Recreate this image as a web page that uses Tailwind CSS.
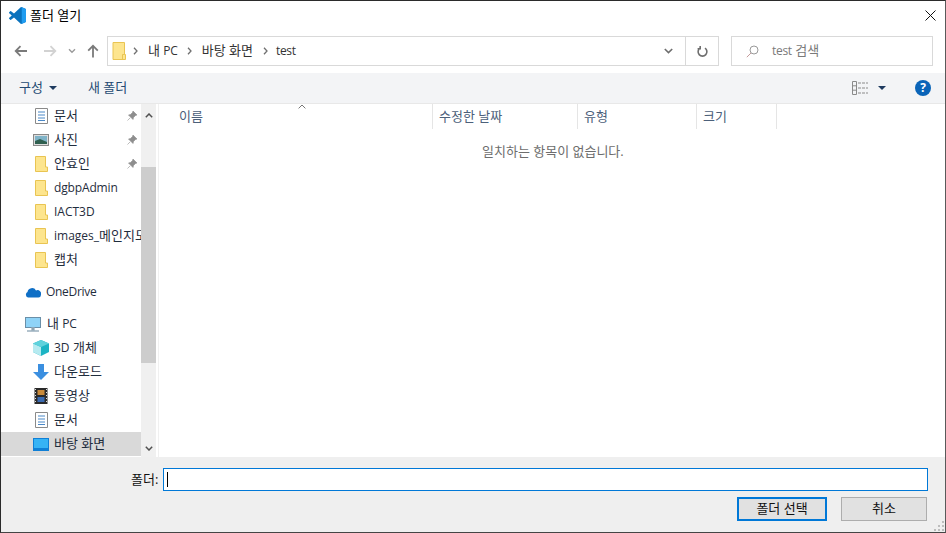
<!DOCTYPE html>
<html lang="ko"><head><meta charset="utf-8">
<script src="https://cdn.jsdelivr.net/npm/@tailwindcss/browser@4"></script>
</head>
<body class="bg-white">
<div class="w-[946px] h-[533px] overflow-hidden flex flex-col border border-[#2b2b2b] border-r-[#5a5a5a] border-b-[#444] bg-white text-[13px] leading-[16px] text-[#1a1a1a] font-['Open_Sans','Noto_Sans_CJK_KR',sans-serif]">
  <!-- title -->
  <div class="h-[29px] shrink-0 flex items-center pl-[8px] pr-[9px]">
    <svg class="w-[17px] h-[17px] shrink-0" viewBox="0 0 100 100"><path d="M70.9 99.3a6.2 6.2 0 0 0 5-.2l20.6-9.9a6.2 6.2 0 0 0 3.5-5.6V16.4a6.2 6.2 0 0 0-3.5-5.6L75.9.9a6.2 6.2 0 0 0-7.1 1.2L29.4 38.1 12.2 25.1a4.2 4.2 0 0 0-5.3.2l-5.5 5a4.2 4.2 0 0 0 0 6.2L16.3 50 1.4 63.6a4.2 4.2 0 0 0 0 6.2l5.5 5a4.2 4.2 0 0 0 5.3.2l17.2-13L68.8 97.9a6.2 6.2 0 0 0 2.1 1.4ZM75 27.3 45.1 50 75 72.7Z" fill="#0a72bd"/><path d="M70.9 99.3a6.2 6.2 0 0 0 5-.2l20.6-9.9a6.2 6.2 0 0 0 3.5-5.6V16.4a6.2 6.2 0 0 0-3.5-5.6L75.9.9a6.2 6.2 0 0 0-5-.2 6 6 0 0 1 4.1 5.6V27.3 72.7 93.7a6 6 0 0 1-4.1 5.6Z" fill="#1f9cf0"/></svg>
    <span class="ml-[4px] pb-[2px] text-black">폴더 열기</span>
    <svg class="ml-auto w-[11px] h-[11px]" viewBox="0 0 11 11"><path d="M0.5 0.5 10.5 10.5M10.5 0.5 0.5 10.5" stroke="#111" stroke-width="1" fill="none"/></svg>
  </div>
  <!-- address row -->
  <div class="h-[43px] shrink-0 flex items-start pt-[6px]">
    <div class="w-[106px] h-[30px] shrink-0 flex items-center pl-[13px]">
      <svg class="w-[14px] h-[12px]" viewBox="0 0 14 12"><path d="M13 6H2M6.5 1.2 1.7 6l4.8 4.8" stroke="#7a7a7a" stroke-width="1.8" fill="none"/></svg>
      <svg class="w-[14px] h-[12px] ml-[15px]" viewBox="0 0 14 12"><path d="M1 6H12M7.5 1.2 12.3 6l-4.8 4.8" stroke="#d2d2d2" stroke-width="1.8" fill="none"/></svg>
      <svg class="w-[8px] h-[6px] ml-[11px]" viewBox="0 0 8 6"><path d="M1 1.2 4 4.2 7 1.2" stroke="#9a9a9a" stroke-width="1.4" fill="none"/></svg>
      <svg class="w-[12px] h-[14px] ml-[11px]" viewBox="0 0 12 14"><path d="M6 13.5V2M1.2 6.6 6 1.8l4.8 4.8" stroke="#7a7a7a" stroke-width="1.8" fill="none"/></svg>
    </div>
    <div class="w-[612px] h-[30px] shrink-0 border border-[#d9d9d9] flex items-center">
      <svg class="ml-[4px] w-[14px] h-[18px] shrink-0" viewBox="0 0 14 18"><path d="M1 .5H12.5V12.5H13.5V17.5H1Z" fill="#fde58e" stroke="#e9c452"/><path d="M10.5 17.5V12.5H12.5" fill="none" stroke="#e9c452"/></svg>
      <svg class="ml-[7px] w-[5px] h-[8px]" viewBox="0 0 5 8"><path d="M1 .8 4 4 1 7.2" stroke="#707070" stroke-width="1.3" fill="none"/></svg>
      <span class="ml-[10px] pb-[2px] text-[#333]">내 <span class="text-[12px] tracking-[-0.2px]">PC</span></span>
      <svg class="ml-[9px] w-[5px] h-[8px]" viewBox="0 0 5 8"><path d="M1 .8 4 4 1 7.2" stroke="#707070" stroke-width="1.3" fill="none"/></svg>
      <span class="ml-[10px] pb-[2px] text-[#333]">바탕 화면</span>
      <svg class="ml-[10px] w-[5px] h-[8px]" viewBox="0 0 5 8"><path d="M1 .8 4 4 1 7.2" stroke="#707070" stroke-width="1.3" fill="none"/></svg>
      <span class="ml-[8px] text-[#333] text-[12px] tracking-[-0.3px]">test</span>
      <div class="ml-auto w-[33px] h-full flex items-center justify-center">
        <svg class="w-[9px] h-[6px]" viewBox="0 0 9 6"><path d="M.8 1 4.5 4.6 8.2 1" stroke="#6e6e6e" stroke-width="1.6" fill="none"/></svg>
      </div>
      <div class="w-[33px] h-full border-l border-[#d9d9d9] flex items-center justify-center">
        <svg class="w-[11px] h-[12px]" viewBox="0 0 11 12"><path d="M3 2.6A4.4 4.4 0 1 0 8 2.6M3.2 0.4V3.2H.6" stroke="#6e6e6e" stroke-width="1.6" fill="none" transform="translate(0 .5)"/></svg>
      </div>
    </div>
    <div class="ml-[12px] w-[202px] h-[30px] border border-[#d9d9d9] flex items-center pl-[14px]">
      <svg class="w-[13px] h-[13px]" viewBox="0 0 13 13"><circle cx="8" cy="5" r="4" fill="none" stroke="#9a9a9a"/><path d="M5 8 .8 12.2" stroke="#c49a9a"/></svg>
      <span class="ml-[13px] pb-[2px] text-[#7a7a7a]"><span class="text-[12px] tracking-[-0.3px]">test</span> 검색</span>
    </div>
  </div>
  <!-- toolbar -->
  <div class="h-[31px] shrink-0 bg-[#f3f4f6] flex items-center pl-[18px] pr-[14px] border-b border-[#e8e8e8]">
    <span class="pb-[2px] text-[#244a72]">구성</span>
    <svg class="ml-[6px] w-[8px] h-[4px]" viewBox="0 0 8 4"><path d="M0 0H8L4 4Z" fill="#1e3a5f"/></svg>
    <span class="ml-[31px] pb-[2px] text-[#244a72]">새 폴더</span>
    <svg class="ml-auto w-[16px] h-[14px]" viewBox="0 0 16 14"><path d="M.5.5H4.5V13.5H.5ZM.5 4.8H4.5M.5 9.2H4.5" fill="none" stroke="#8a8a8a"/><path d="M6 2H16M6 7H16M6 12H16" stroke="#8a8a8a" stroke-dasharray="3 1"/></svg>
    <svg class="ml-[10px] w-[8px] h-[4px]" viewBox="0 0 8 4"><path d="M0 0H8L4 4Z" fill="#1e3a5f"/></svg>
    <div class="ml-[29px] w-[16px] h-[16px] rounded-full bg-[#0a64b8] text-white font-bold text-[12px] leading-[16px] text-center">?</div>
  </div>
  <!-- main -->
  <div class="flex-1 min-h-0 flex">
    <div class="w-[140px] shrink-0 flex flex-col overflow-hidden text-[#1f2d3d]">
      <div class="h-[24px] flex items-center pl-[34px] shrink-0"><svg class="w-[13px] h-[16px] shrink-0" viewBox="0 0 13 16"><path d="M.5.5H12.5V15.5H.5Z" fill="#fff" stroke="#8a8a8a"/><path d="M3 4H10M3 7H10M3 10H10M3 12.5H10" stroke="#4a88c7"/></svg><span class="ml-[6px] pb-[2px]">문서</span><svg class="ml-auto mr-[4px] w-[10px] h-[10px]" viewBox="0 0 10 10"><path d="M6 0 10 4 8.5 4.5 6.5 6.5 6 8.5 1.5 4 3.5 3.5 5.5 1.5ZM3.2 6.8 .5 9.5" fill="#8e8e8e" stroke="#8e8e8e" stroke-width=".6"/></svg></div>
      <div class="h-[24px] flex items-center pl-[32px] shrink-0"><svg class="w-[16px] h-[12px] shrink-0" viewBox="0 0 16 12"><rect x=".5" y=".5" width="15" height="11" fill="#ddd" stroke="#888"/><rect x="2" y="2" width="12" height="8" fill="#7fb3c8"/><path d="M2 7 7 5l7 3v2H2Z" fill="#2f5f4f"/></svg><span class="ml-[5px] pb-[2px]">사진</span><svg class="ml-auto mr-[4px] w-[10px] h-[10px]" viewBox="0 0 10 10"><path d="M6 0 10 4 8.5 4.5 6.5 6.5 6 8.5 1.5 4 3.5 3.5 5.5 1.5ZM3.2 6.8 .5 9.5" fill="#8e8e8e" stroke="#8e8e8e" stroke-width=".6"/></svg></div>
      <div class="h-[24px] flex items-center pl-[34px] shrink-0"><svg class="w-[13px] h-[16px] shrink-0" viewBox="0 0 13 16"><path d="M.5.5H10.5V11H12.5V15.5H.5Z" fill="#fde58e" stroke="#e9c452"/></svg><span class="ml-[6px] pb-[2px]">안효인</span><svg class="ml-auto mr-[4px] w-[10px] h-[10px]" viewBox="0 0 10 10"><path d="M6 0 10 4 8.5 4.5 6.5 6.5 6 8.5 1.5 4 3.5 3.5 5.5 1.5ZM3.2 6.8 .5 9.5" fill="#8e8e8e" stroke="#8e8e8e" stroke-width=".6"/></svg></div>
      <div class="h-[24px] flex items-center pl-[34px] shrink-0"><svg class="w-[13px] h-[16px] shrink-0" viewBox="0 0 13 16"><path d="M.5.5H10.5V11H12.5V15.5H.5Z" fill="#fde58e" stroke="#e9c452"/></svg><span class="ml-[6px] text-[12px] tracking-[-0.15px]">dgbpAdmin</span></div>
      <div class="h-[24px] flex items-center pl-[34px] shrink-0"><svg class="w-[13px] h-[16px] shrink-0" viewBox="0 0 13 16"><path d="M.5.5H10.5V11H12.5V15.5H.5Z" fill="#fde58e" stroke="#e9c452"/></svg><span class="ml-[6px] text-[12px]">IACT3D</span></div>
      <div class="h-[24px] flex items-center pl-[34px] shrink-0"><svg class="w-[13px] h-[16px] shrink-0" viewBox="0 0 13 16"><path d="M.5.5H10.5V11H12.5V15.5H.5Z" fill="#fde58e" stroke="#e9c452"/></svg><span class="ml-[6px] pb-[2px] whitespace-nowrap"><span class="text-[12px]">images_</span>메인지도</span></div>
      <div class="h-[24px] flex items-center pl-[34px] shrink-0"><svg class="w-[13px] h-[16px] shrink-0" viewBox="0 0 13 16"><path d="M.5.5H10.5V11H12.5V15.5H.5Z" fill="#fde58e" stroke="#e9c452"/></svg><span class="ml-[6px] pb-[2px]">캡처</span></div>
      <div class="h-[24px] mt-[8px] flex items-center pl-[24px] shrink-0"><svg class="w-[16px] h-[11px] shrink-0" viewBox="0 0 16 11"><path d="M3 10.5A3 3 0 0 1 2.5 5 4.6 4.6 0 0 1 11 3.4 3.7 3.7 0 0 1 15.9 8.2 2.5 2.5 0 0 1 13.5 10.5Z" fill="#0f6fc6"/></svg><span class="ml-[5px] text-[12px] tracking-[-0.3px]">OneDrive</span></div>
      <div class="h-[24px] mt-[8px] flex items-center pl-[24px] shrink-0"><svg class="w-[16px] h-[15px] shrink-0" viewBox="0 0 16 15"><rect x=".5" y=".5" width="15" height="10" fill="#8fd3f7" stroke="#6a8fa8"/><path d="M7 11H9V13H7ZM2 14H14" stroke="#9ab0be" stroke-width="1.4"/></svg><span class="ml-[6px] pb-[2px]">내 <span class="text-[12px] tracking-[-0.2px]">PC</span></span></div>
      <div class="h-[24px] flex items-center pl-[32px] shrink-0"><svg class="w-[16px] h-[16px] shrink-0" viewBox="0 0 16 16"><path d="M8 0 16 3.5V12L8 16 0 12V3.5Z" fill="#1cb4c4"/><path d="M8 7 0 3.5V12L8 16Z" fill="#b6eaf0"/><path d="M8 0 16 3.5 8 7 0 3.5Z" fill="#5fd2dc"/></svg><span class="ml-[5px] pb-[2px]"><span class="text-[12px]">3D</span> 개체</span></div>
      <div class="h-[24px] flex items-center pl-[32px] shrink-0"><svg class="w-[16px] h-[16px] shrink-0" viewBox="0 0 16 16"><path d="M5 0H11V8H16L8 16 0 8H5Z" fill="#3b8fe0"/></svg><span class="ml-[5px] pb-[2px]">다운로드</span></div>
      <div class="h-[24px] flex items-center pl-[33px] shrink-0"><svg class="w-[14px] h-[16px] shrink-0" viewBox="0 0 13 16"><rect width="13" height="16" fill="#2a2a2a"/><rect x="3" y="2" width="7" height="5" fill="#c98a3a"/><rect x="3" y="9" width="7" height="5" fill="#3a6ab0"/><path d="M1 1V15M12 1V15" stroke="#ddd" stroke-dasharray="1 2"/></svg><span class="ml-[6px] pb-[2px]">동영상</span></div>
      <div class="h-[24px] flex items-center pl-[34px] shrink-0"><svg class="w-[13px] h-[16px] shrink-0" viewBox="0 0 13 16"><path d="M.5.5H12.5V15.5H.5Z" fill="#fff" stroke="#8a8a8a"/><path d="M3 4H10M3 7H10M3 10H10M3 12.5H10" stroke="#4a88c7"/></svg><span class="ml-[6px] pb-[2px]">문서</span></div>
      <div class="h-[24px] flex items-center pl-[32px] shrink-0 bg-[#d9d9d9]"><svg class="w-[16px] h-[13px] shrink-0" viewBox="0 0 16 13"><rect width="16" height="13" fill="#0f7fd6"/><rect x="1" y="1" width="14" height="9" fill="#36b3f5"/></svg><span class="ml-[5px] pb-[2px]">바탕 화면</span></div>
    </div>
    <div class="w-[15px] shrink-0 bg-[#f0f0f0] flex flex-col">
      <div class="h-[63px] flex justify-center pt-[9px]"><svg class="w-[8px] h-[5px]" viewBox="0 0 8 5"><path d="M.8 4.2 4 1l3.2 3.2" stroke="#505050" stroke-width="1.5" fill="none"/></svg></div>
      <div class="h-[196px] bg-[#cdcdcd]"></div>
      <div class="flex-1 flex justify-center items-end pb-[6px]"><svg class="w-[8px] h-[5px]" viewBox="0 0 8 5"><path d="M.8.8 4 4l3.2-3.2" stroke="#505050" stroke-width="1.5" fill="none"/></svg></div>
    </div>
    <div class="w-[2px] shrink-0"></div>
    <div class="flex-1 min-w-0 border-l border-[#f0f0f0] flex flex-col text-[#4c607a]">
      <div class="h-[25px] shrink-0 flex relative">
        <div class="w-[274px] pl-[20px] pb-[2px] flex items-center border-r border-[#e5e5e5]">이름</div>
        <svg class="absolute left-[139px] top-0 w-[8px] h-[5px]" viewBox="0 0 8 5"><path d="M.6 4.4 4 1l3.4 3.4" stroke="#777" fill="none"/></svg>
        <div class="w-[145px] pl-[6px] pb-[2px] flex items-center border-r border-[#e5e5e5]">수정한 날짜</div>
        <div class="w-[119px] pl-[6px] pb-[2px] flex items-center border-r border-[#e5e5e5]">유형</div>
        <div class="w-[80px] pl-[6px] pb-[2px] flex items-center border-r border-[#e5e5e5]">크기</div>
      </div>
      <div class="pt-[14px] pl-[323px] text-[#6d6d6d]">일치하는 항목이 없습니다.</div>
    </div>
  </div>
  <!-- footer -->
  <div class="h-[75px] shrink-0 bg-[#efefef] relative flex flex-col">
    <div class="h-[23px] mt-[11px] flex items-center">
      <span class="ml-[130px] pb-[2px] text-[#111]">폴더:</span>
      <div class="ml-auto mr-[17px] w-[765px] h-[23px] bg-white border border-[#0078d7] flex items-center pl-[3px]"><div class="w-px h-[15px] bg-black"></div></div>
    </div>
    <div class="flex mt-[6px] justify-end pr-[18px] gap-[14px]">
      <div class="w-[90px] h-[24px] pb-[2px] bg-[#e1e1e1] border-2 border-[#0078d7] flex items-center justify-center text-[#111]">폴더 선택</div>
      <div class="w-[86px] h-[24px] pb-[2px] bg-[#e1e1e1] border border-[#adadad] flex items-center justify-center text-[#111]">취소</div>
    </div>
    <svg class="absolute right-0 bottom-0 w-[11px] h-[11px]" viewBox="0 0 11 11"><path d="M8 0h2v2H8ZM4 4h2v2H4ZM8 4h2v2H8ZM0 8h2v2H0ZM4 8h2v2H4ZM8 8h2v2H8Z" fill="#bdbdbd"/></svg>
  </div>
</div>
</body></html>
